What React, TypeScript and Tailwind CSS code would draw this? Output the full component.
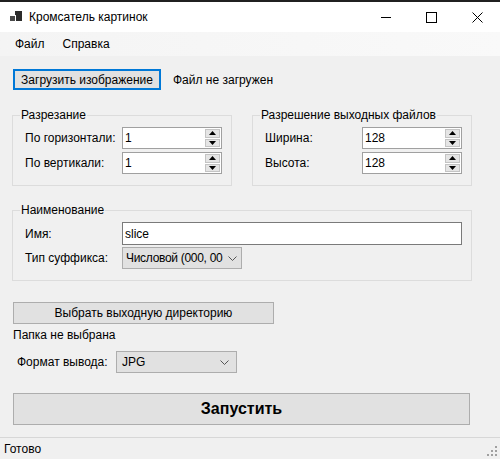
import React from "react";

function Spin({ value }: { value: string }) {
  return (
    <div className="w-[100px] h-[22px] border border-[#a0a0a0] bg-white flex items-stretch">
      <div className="flex-1 flex items-center pl-[2px] leading-[16px]">{value}</div>
      <div className="w-[16px] flex flex-col py-[1px] pr-[1px] gap-[1px]">
        <div className="flex-1 bg-[#e5e5e5] border border-[#c4c4c4] flex items-center justify-center">
          <svg width="7" height="4" viewBox="0 0 7 4"><path d="M0 4 L3.5 0 L7 4 Z" fill="#000" /></svg>
        </div>
        <div className="flex-1 bg-[#e5e5e5] border border-[#c4c4c4] flex items-center justify-center">
          <svg width="7" height="4" viewBox="0 0 7 4"><path d="M0 0 L3.5 4 L7 0 Z" fill="#000" /></svg>
        </div>
      </div>
    </div>
  );
}

function Chevron() {
  return (
    <svg width="9" height="5" viewBox="0 0 9 5" className="shrink-0">
      <path d="M0.5 0.5 L4.5 4.5 L8.5 0.5" fill="none" stroke="#555" strokeWidth="1" />
    </svg>
  );
}

function Group({ title, className, children }: { title: string; className: string; children: React.ReactNode }) {
  return (
    <div className={"relative border border-[#dcdcdc] " + className}>
      <span className="absolute -top-[9px] left-[7px] px-[1px] bg-[#f0f0f0] leading-[16px]">{title}</span>
      {children}
    </div>
  );
}

export default function App() {
  return (
    <div className="w-[500px] h-[459px] bg-[#f0f0f0] flex flex-col overflow-hidden text-[12px] text-black font-['Segoe_UI','Liberation_Sans',sans-serif]">
      <div className="h-[2px] bg-[#202020]" />
      <div className="h-[30px] bg-white flex items-center">
        <svg width="12" height="12" viewBox="0 0 12 12" className="ml-[10px]">
          <rect x="0" y="5" width="5" height="5" fill="#4a4a4a" />
          <rect x="6" y="0" width="6" height="10" fill="#2c2c2c" />
          <rect x="5" y="0" width="1" height="4" fill="#2c2c2c" />
        </svg>
        <span className="ml-[7px] leading-[16px]">Кромсатель картинок</span>
        <div className="flex-1" />
        <svg width="11" height="11" viewBox="0 0 11 11" className="mr-[34px]">
          <path d="M0 5.5 H10" stroke="#000" strokeWidth="1" />
        </svg>
        <svg width="11" height="11" viewBox="0 0 11 11" className="mr-[35px]">
          <rect x="0.5" y="0.5" width="10" height="10" fill="none" stroke="#000" strokeWidth="1" />
        </svg>
        <svg width="11" height="11" viewBox="0 0 11 11" className="mr-[17px]">
          <path d="M0.5 0.5 L10.5 10.5 M10.5 0.5 L0.5 10.5" stroke="#000" strokeWidth="1" />
        </svg>
      </div>
      <div className="h-[24px] bg-gradient-to-r from-[#f4f4f4] to-[#f9f9f9] flex items-center leading-[16px]">
        <span className="ml-[15px]">Файл</span>
        <span className="ml-[18px]">Справка</span>
      </div>

      <div className="flex flex-col pl-[12px]">
        <div className="flex items-center mt-[13px] ml-[1px]">
          <div className="w-[148px] h-[21px] border-2 border-[#0078d7] bg-[#e1e1e1] flex items-center justify-center leading-[16px]">
            Загрузить изображение
          </div>
          <span className="ml-[12px] leading-[16px]">Файл не загружен</span>
        </div>

        <div className="flex mt-[25px] gap-[20px]">
          <Group title="Разрезание" className="w-[220px] h-[71px]">
            <div className="flex flex-col pl-[12px] pt-[11px] gap-[3px]">
              <div className="flex items-center">
                <span className="w-[97px] leading-[16px]">По горизонтали:</span>
                <Spin value="1" />
              </div>
              <div className="flex items-center">
                <span className="w-[97px] leading-[16px]">По вертикали:</span>
                <Spin value="1" />
              </div>
            </div>
          </Group>
          <Group title="Разрешение выходных файлов" className="w-[220px] h-[71px]">
            <div className="flex flex-col pl-[12px] pt-[11px] gap-[3px]">
              <div className="flex items-center">
                <span className="w-[97px] leading-[16px]">Ширина:</span>
                <Spin value="128" />
              </div>
              <div className="flex items-center">
                <span className="w-[97px] leading-[16px]">Высота:</span>
                <Spin value="128" />
              </div>
            </div>
          </Group>
        </div>

        <Group title="Наименование" className="w-[460px] h-[71px] mt-[24px]">
          <div className="flex flex-col pl-[12px] pt-[11px] gap-[2px]">
            <div className="flex items-center">
              <span className="w-[97px] leading-[16px]">Имя:</span>
              <div className="w-[340px] h-[23px] border border-[#7a7a7a] bg-white flex items-center pl-[2px] leading-[16px]">slice</div>
            </div>
            <div className="flex items-center">
              <span className="w-[97px] leading-[16px]">Тип суффикса:</span>
              <div className="w-[120px] h-[22px] border border-[#adadad] bg-[#e1e1e1] flex items-center pl-[3px] pr-[4px] gap-[4px] leading-[16px]">
                <span className="flex-1 whitespace-nowrap tracking-[-0.3px]">Числовой (000, 00</span>
                <Chevron />
              </div>
            </div>
          </div>
        </Group>

        <div className="w-[261px] h-[22px] mt-[21px] ml-[1px] border border-[#adadad] bg-[#e1e1e1] flex items-center justify-center leading-[16px]">
          Выбрать выходную директорию
        </div>
        <span className="mt-[3px] ml-[1px] leading-[16px]">Папка не выбрана</span>
        <div className="flex items-center mt-[8px] ml-[5px]">
          <span className="w-[99px] leading-[16px]">Формат вывода:</span>
          <div className="w-[121px] h-[22px] border border-[#adadad] bg-[#e1e1e1] flex items-center pl-[5px] pr-[7px] leading-[16px]">
            <span className="flex-1">JPG</span>
            <Chevron />
          </div>
        </div>
        <div className="w-[457px] h-[32px] mt-[20px] ml-[1px] border border-[#adadad] bg-[#e1e1e1] flex items-center justify-center text-[16px] font-bold leading-[20px]">
          Запустить
        </div>
      </div>

      <div className="mt-auto h-[22px] border-t border-[#d7d7d7] flex items-center relative">
        <span className="ml-[4px] leading-[16px]">Готово</span>
        <svg width="10" height="10" viewBox="0 0 10 10" className="absolute right-[3px] bottom-[3px]">
          <rect x="8" y="0" width="2" height="2" fill="#a0a0a0" />
          <rect x="4" y="4" width="2" height="2" fill="#a0a0a0" />
          <rect x="8" y="4" width="2" height="2" fill="#a0a0a0" />
          <rect x="0" y="8" width="2" height="2" fill="#a0a0a0" />
          <rect x="4" y="8" width="2" height="2" fill="#a0a0a0" />
          <rect x="8" y="8" width="2" height="2" fill="#a0a0a0" />
        </svg>
      </div>
    </div>
  );
}
